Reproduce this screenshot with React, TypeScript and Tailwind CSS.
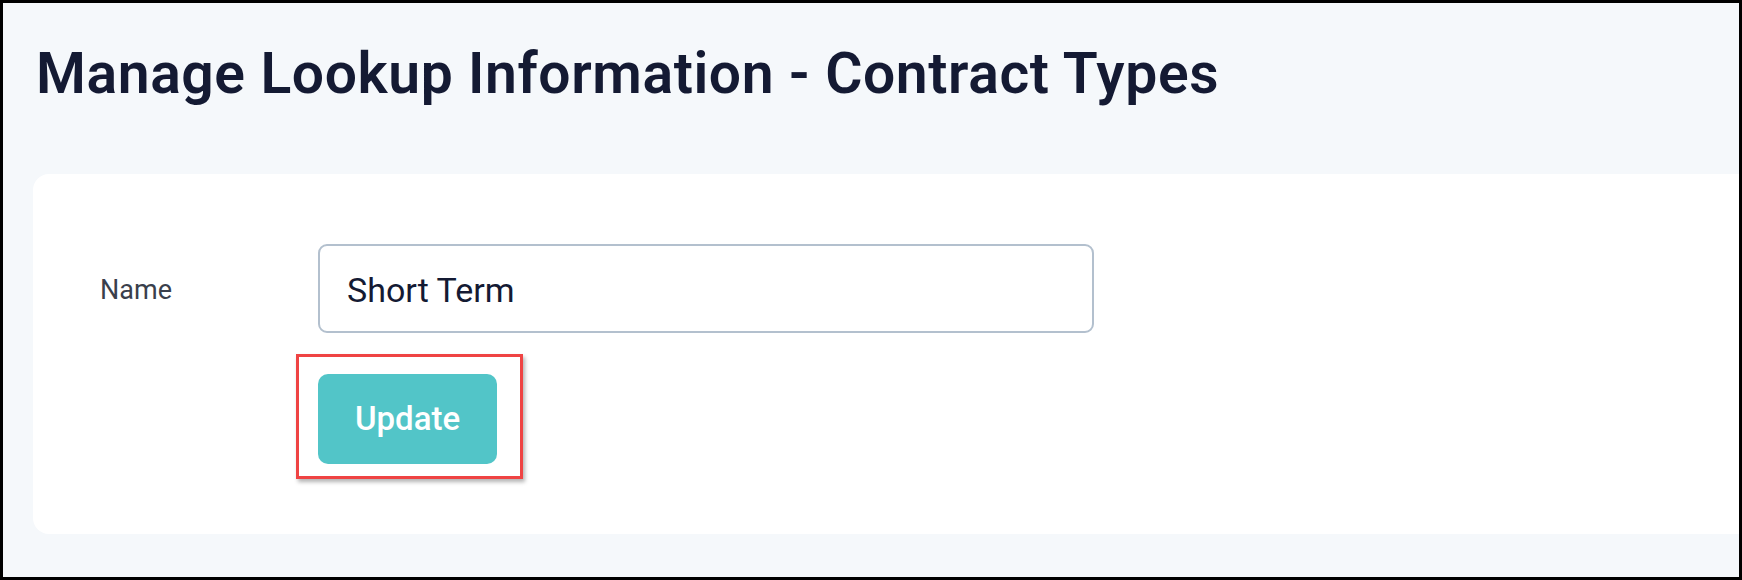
export default function App() {
  return (
    <div
      className="h-[580px] w-[1742px] overflow-hidden border-[3px] border-black bg-[#f5f8fb]"
      style={{ fontFamily: "Roboto, 'Noto Sans', sans-serif" }}
    >
      <h1 className="pl-[33px] pt-[42px] text-[57px] font-semibold leading-none tracking-[0.6px] text-[#141a33]">
        Manage Lookup Information - Contract Types
      </h1>

      {/* Form card */}
      <div className="ml-[30px] mt-[72px] h-[360px] rounded-l-2xl bg-white pl-[67px] pt-[70px]">
        <div className="flex items-center">
          <label className="w-[218px] pt-[4px] text-[27px] text-[#3a3f4c]">Name</label>
          <input
            defaultValue="Short Term"
            className="h-[89px] w-[776px] rounded-[9px] border-2 border-[#b3c0ce] bg-white px-[27px] pt-[3px] text-[34px] text-[#141a33] outline-none"
          />
        </div>

        <div className="relative ml-[218px] mt-[41px] w-[179px]">
          <button className="h-[90px] w-[179px] rounded-[10px] bg-[#52c5c8] text-[33px] font-medium text-white">
            Update
          </button>
          {/* highlight annotation */}
          <div className="pointer-events-none absolute -left-[22px] -top-[20px] h-[125px] w-[227px] border-[3px] border-[#ef4343] shadow-[2px_3px_4px_rgba(0,0,0,0.3)]" />
        </div>
      </div>
    </div>
  );
}
